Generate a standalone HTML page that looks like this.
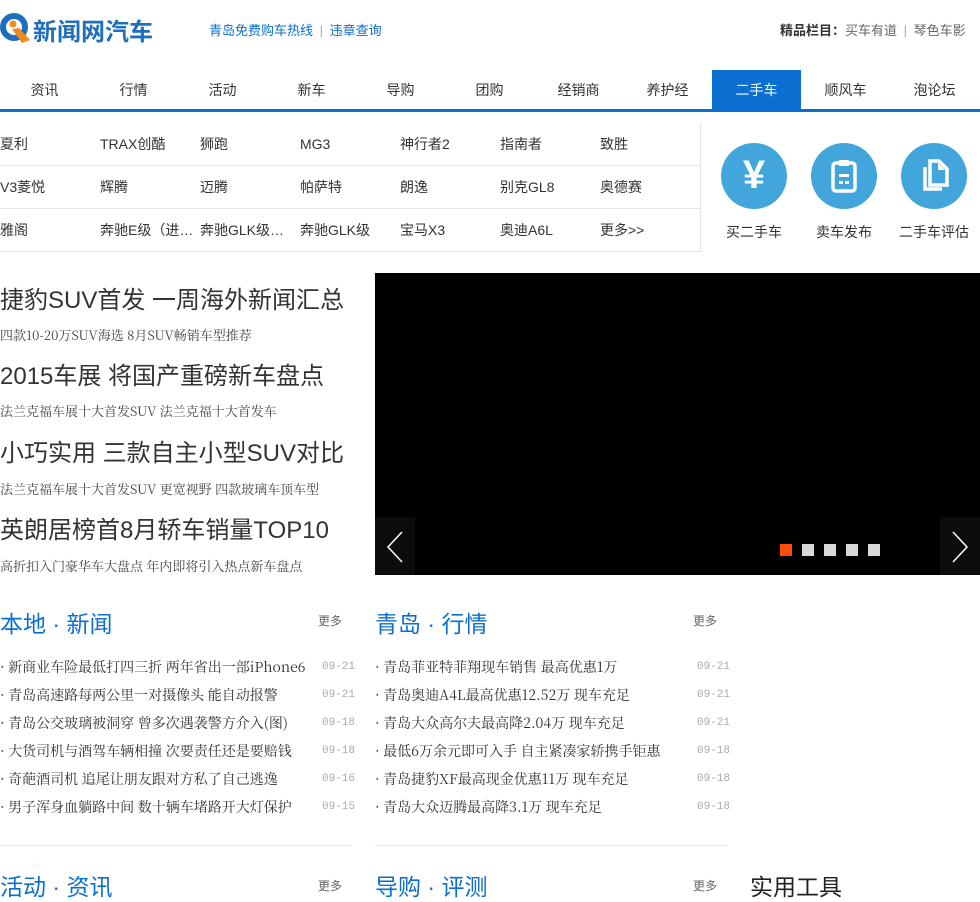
<!DOCTYPE html>
<html><head><meta charset="utf-8"><style>
*{margin:0;padding:0;box-sizing:border-box}
body{width:980px;height:891px;overflow:hidden;background:#fff;font-family:"Liberation Sans","Noto Sans CJK SC",sans-serif;color:#333;position:relative}
.a{position:absolute;white-space:nowrap}
.nav{position:absolute;left:0;top:70px;width:980px;height:42px;border-bottom:3px solid #0a6fd0}
.nav span{float:left;width:89px;height:39px;line-height:40px;text-align:center;font-size:14px;color:#333}
.nav span.on{background:#0a6fd0;color:#fff}
.grid{position:absolute;left:0;top:123px;width:701px;border-right:1px solid #e5e5e5}
.grid div{height:43px;border-bottom:1px solid #e5e5e5;font-size:14px;line-height:43px}
.grid span{display:inline-block;width:100px;overflow:hidden;white-space:nowrap;text-overflow:ellipsis;vertical-align:top;color:#333}
.circ{position:absolute;top:143px;width:66px;height:66px;border-radius:50%;background:#42a6dc}
.cl{position:absolute;top:222px;font-size:14px;color:#333;width:90px;text-align:center}
.h{font-size:24px;color:#333;left:0}
.s{font-size:13px;color:#444;left:0;font-family:"Noto Serif CJK SC","Liberation Serif",serif}
.sec{font-size:23px;color:#0a6fd0}
.more{font-size:12px;color:#666}
ul{position:absolute;list-style:none;font-size:14px;color:#333}
ul li{height:28px;line-height:28px;position:relative;font-family:"Noto Serif CJK SC","Liberation Serif",serif;white-space:nowrap}
ul li i{position:absolute;top:0;font-style:normal;font-size:11px;color:#aaa;font-family:"Liberation Mono",monospace;white-space:nowrap}
</style></head><body>
<svg class="a" style="left:0;top:12px" width="32" height="32" viewBox="0 0 32 32"><circle cx="14" cy="15" r="11" fill="none" stroke="#1f6fbf" stroke-width="6"/><circle cx="13" cy="12" r="3.5" fill="#f08a1c"/><path d="M12 17 L22 31 L30 28 L19 16Z" fill="#f08a1c"/></svg>
<div class="a" style="left:33px;top:12px;font-size:24px;font-weight:bold;color:#1f6fbf">新闻网汽车</div>
<div class="a" style="left:209px;top:20px;font-size:13px;color:#0a6fd0">青岛免费购车热线 <span style="color:#aaa;margin:0 3px">|</span> 违章查询</div>
<div class="a" style="left:780px;top:20px;font-size:13px;color:#666"><b style="color:#333">精品栏目：</b>买车有道 <span style="color:#aaa;margin:0 3px">|</span> 琴色车影</div>
<div class="nav"><span>资讯</span><span>行情</span><span>活动</span><span>新车</span><span>导购</span><span>团购</span><span>经销商</span><span>养护经</span><span class="on">二手车</span><span>顺风车</span><span>泡论坛</span></div>
<div class="grid">
<div><span>夏利</span><span>TRAX创酷</span><span>狮跑</span><span>MG3</span><span>神行者2</span><span>指南者</span><span>致胜</span></div>
<div><span>V3菱悦</span><span>辉腾</span><span>迈腾</span><span>帕萨特</span><span>朗逸</span><span>别克GL8</span><span>奥德赛</span></div>
<div><span>雅阁</span><span style="width:95px;margin-right:5px">奔驰E级（进口）</span><span style="width:95px;margin-right:5px">奔驰GLK级（进口）</span><span>奔驰GLK级</span><span>宝马X3</span><span>奥迪A6L</span><span>更多&gt;&gt;</span></div>
</div>
<div class="circ" style="left:721px"><div class="a" style="left:0;top:8px;width:66px;text-align:center;color:#fff;font-size:40px;font-weight:bold;line-height:48px">¥</div></div>
<div class="circ" style="left:811px"><svg class="a" style="left:20px;top:16px" width="26" height="34" viewBox="0 0 26 34"><rect x="2" y="4" width="22" height="28" rx="3" fill="none" stroke="#fff" stroke-width="3.5"/><rect x="8" y="1" width="10" height="6" rx="1" fill="#fff"/><rect x="8" y="15" width="10" height="3" fill="#fff"/><rect x="8" y="22" width="4" height="3" fill="#fff"/><rect x="14" y="22" width="4" height="3" fill="#fff"/></svg></div>
<div class="circ" style="left:901px"><svg class="a" style="left:19px;top:16px" width="30" height="34" viewBox="0 0 30 34"><path d="M5 8 V30 H22" fill="none" stroke="#fff" stroke-width="3.5"/><path d="M10 2 H19 L27 10 V26 H10Z" fill="none" stroke="#fff" stroke-width="3.5"/><path d="M18 4 V11 H25" fill="#fff"/></svg></div>
<div class="cl" style="left:709px">买二手车</div>
<div class="cl" style="left:799px">卖车发布</div>
<div class="cl" style="left:889px">二手车评估</div>

<div class="a h" style="top:280px">捷豹SUV首发 一周海外新闻汇总</div>
<div class="a s" style="top:325px">四款10-20万SUV海选 8月SUV畅销车型推荐</div>
<div class="a h" style="top:356px">2015车展 将国产重磅新车盘点</div>
<div class="a s" style="top:401px">法兰克福车展十大首发SUV 法兰克福十大首发车</div>
<div class="a h" style="top:433px">小巧实用 三款自主小型SUV对比</div>
<div class="a s" style="top:479px">法兰克福车展十大首发SUV 更宽视野 四款玻璃车顶车型</div>
<div class="a h" style="top:510px">英朗居榜首8月轿车销量TOP10</div>
<div class="a s" style="top:556px">高折扣入门豪华车大盘点 年内即将引入热点新车盘点</div>

<div class="a" style="left:375px;top:273px;width:605px;height:302px;background:#000">
<div class="a" style="left:0;top:244px;width:40px;height:58px;background:#0c0c0c"><svg width="40" height="58"><path d="M27 15 L13 30 L27 45" fill="none" stroke="#fff" stroke-width="1.5"/></svg></div>
<div class="a" style="left:565px;top:244px;width:40px;height:58px;background:#0c0c0c"><svg width="40" height="58"><path d="M13 15 L27 30 L13 45" fill="none" stroke="#fff" stroke-width="1.5"/></svg></div>
<div class="a" style="left:405px;top:271px;width:12px;height:12px;background:#ff4e0a"></div>
<div class="a" style="left:427px;top:271px;width:12px;height:12px;background:#d8d8d8"></div>
<div class="a" style="left:449px;top:271px;width:12px;height:12px;background:#d8d8d8"></div>
<div class="a" style="left:471px;top:271px;width:12px;height:12px;background:#d8d8d8"></div>
<div class="a" style="left:493px;top:271px;width:12px;height:12px;background:#d8d8d8"></div>
</div>

<div class="a sec" style="left:0;top:605px">本地 · 新闻</div>
<div class="a more" style="left:318px;top:612px">更多</div>
<ul style="left:0;top:653px;width:352px">
<li>· 新商业车险最低打四三折 两年省出一部iPhone6<i style="left:322px">09-21</i></li>
<li>· 青岛高速路每两公里一对摄像头 能自动报警<i style="left:322px">09-21</i></li>
<li>· 青岛公交玻璃被洞穿 曾多次遇袭警方介入(图)<i style="left:322px">09-18</i></li>
<li>· 大货司机与酒驾车辆相撞 次要责任还是要赔钱<i style="left:322px">09-18</i></li>
<li>· 奇葩酒司机 追尾让朋友跟对方私了自己逃逸<i style="left:322px">09-16</i></li>
<li>· 男子浑身血躺路中间 数十辆车堵路开大灯保护<i style="left:322px">09-15</i></li>
</ul>
<div class="a" style="left:0;top:845px;width:352px;height:1px;background:#e5e5e5"></div>

<div class="a sec" style="left:375px;top:605px">青岛 · 行情</div>
<div class="a more" style="left:693px;top:612px">更多</div>
<ul style="left:375px;top:653px;width:352px">
<li>· 青岛菲亚特菲翔现车销售 最高优惠1万<i style="left:322px">09-21</i></li>
<li>· 青岛奥迪A4L最高优惠12.52万 现车充足<i style="left:322px">09-21</i></li>
<li>· 青岛大众高尔夫最高降2.04万 现车充足<i style="left:322px">09-21</i></li>
<li>· 最低6万余元即可入手 自主紧凑家轿携手钜惠<i style="left:322px">09-18</i></li>
<li>· 青岛捷豹XF最高现金优惠11万 现车充足<i style="left:322px">09-18</i></li>
<li>· 青岛大众迈腾最高降3.1万 现车充足<i style="left:322px">09-18</i></li>
</ul>
<div class="a" style="left:375px;top:845px;width:352px;height:1px;background:#e5e5e5"></div>

<div class="a sec" style="left:0;top:868px">活动 · 资讯</div>
<div class="a more" style="left:318px;top:877px">更多</div>
<div class="a sec" style="left:375px;top:868px">导购 · 评测</div>
<div class="a more" style="left:693px;top:877px">更多</div>
<div class="a" style="left:750px;top:868px;font-size:23px;color:#222">实用工具</div>
</body></html>
